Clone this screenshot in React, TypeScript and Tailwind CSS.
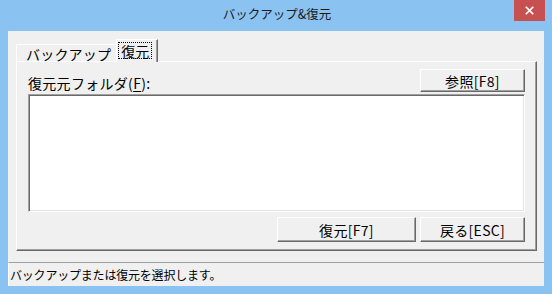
import React from "react";

const FONT = { fontFamily: '"Noto Sans CJK JP", "Noto Sans", sans-serif' };

// classic raised 3D edge used for buttons
const raised =
  "border border-t-white border-l-white border-r-[#696969] border-b-[#696969] shadow-[inset_-1px_-1px_0_#a0a0a0] bg-[#f0f0f0]";

function Btn({ children, className }: { children: React.ReactNode; className?: string }) {
  return (
    <div className={`${raised} flex items-center justify-center text-[14px] leading-none text-black tracking-[0.3px] ${className ?? ""}`}>
      {children}
    </div>
  );
}

export default function App() {
  return (
    <div className="w-[552px] h-[294px] bg-[#8ac3f1] flex flex-col" style={FONT}>
      {/* Title bar */}
      <div className="relative h-[31px] flex items-center justify-center pb-[2px]">
        <span className="text-[12.5px] text-[#1a1a1a] tracking-[0px] pl-[2px]">バックアップ&amp;復元</span>
        <div className="absolute top-0 right-[7px] w-[31px] h-[21px] bg-[#c75050] flex items-center justify-center">
          <svg viewBox="0 0 10 10" className="w-[9px] h-[9px]" stroke="white" strokeWidth="1.8" strokeLinecap="square">
            <path d="M1.5 1.5 L8.5 8.5 M8.5 1.5 L1.5 8.5" />
          </svg>
        </div>
      </div>

      {/* Client area */}
      <div className="mx-[8px] h-[255px] bg-[#f0f0f0] flex flex-col">
        <div className="flex-1 flex flex-col pl-[8px] pr-[7px] pt-[9px]">
          {/* Tabs */}
          <div className="flex items-end h-[22px] relative z-10 -mb-px">
            <div className="h-[18px] pl-[9px] pr-[5px] border-l border-t border-white flex items-center text-[14px] leading-none text-black tracking-[0.2px]">
              バックアップ
            </div>
            <div className="h-[23px] w-[42px] border-l border-t border-white border-r border-r-[#696969] shadow-[inset_-1px_0_0_#a0a0a0] bg-[#f0f0f0] flex items-start pt-[2px] pl-[1px]">
              <div className="border border-dotted border-black h-[17px] px-[2px] flex items-center text-[14px] leading-none text-black">
                復元
              </div>
            </div>
          </div>

          {/* Tab panel */}
          <div className="h-[190px] border border-t-white border-l-white border-r-[#696969] border-b-[#696969] shadow-[inset_-1px_-1px_0_#a0a0a0] flex flex-col pl-[11px] pr-[11px] pt-[7px]">
            <div className="flex items-center justify-between">
              <span className="text-[14px] leading-none text-black pt-[4px] tracking-[0.3px]">
                復元元フォルダ(<span className="underline underline-offset-2">F</span>):
              </span>
              <Btn className="w-[105px] h-[23px]">参照[F8]</Btn>
            </div>
            <div className="mt-[2px] h-[118px] bg-white border border-t-[#a0a0a0] border-l-[#a0a0a0] border-r-white border-b-white shadow-[inset_1px_1px_0_#696969,inset_-1px_-1px_0_#e3e3e3]" />
            <div className="flex justify-end gap-[4px] mt-[5px]">
              <Btn className="w-[139px] h-[25px]">復元[F7]</Btn>
              <Btn className="w-[105px] h-[25px]">戻る[ESC]</Btn>
            </div>
          </div>
        </div>

        {/* Status bar */}
        <div className="mt-[10px] h-[24px] border-t border-t-[#a0a0a0] border-l border-l-white flex items-center pl-[1px] text-[12px] leading-none text-black tracking-[-0.2px]">
          バックアップまたは復元を選択します。
        </div>
      </div>
    </div>
  );
}
